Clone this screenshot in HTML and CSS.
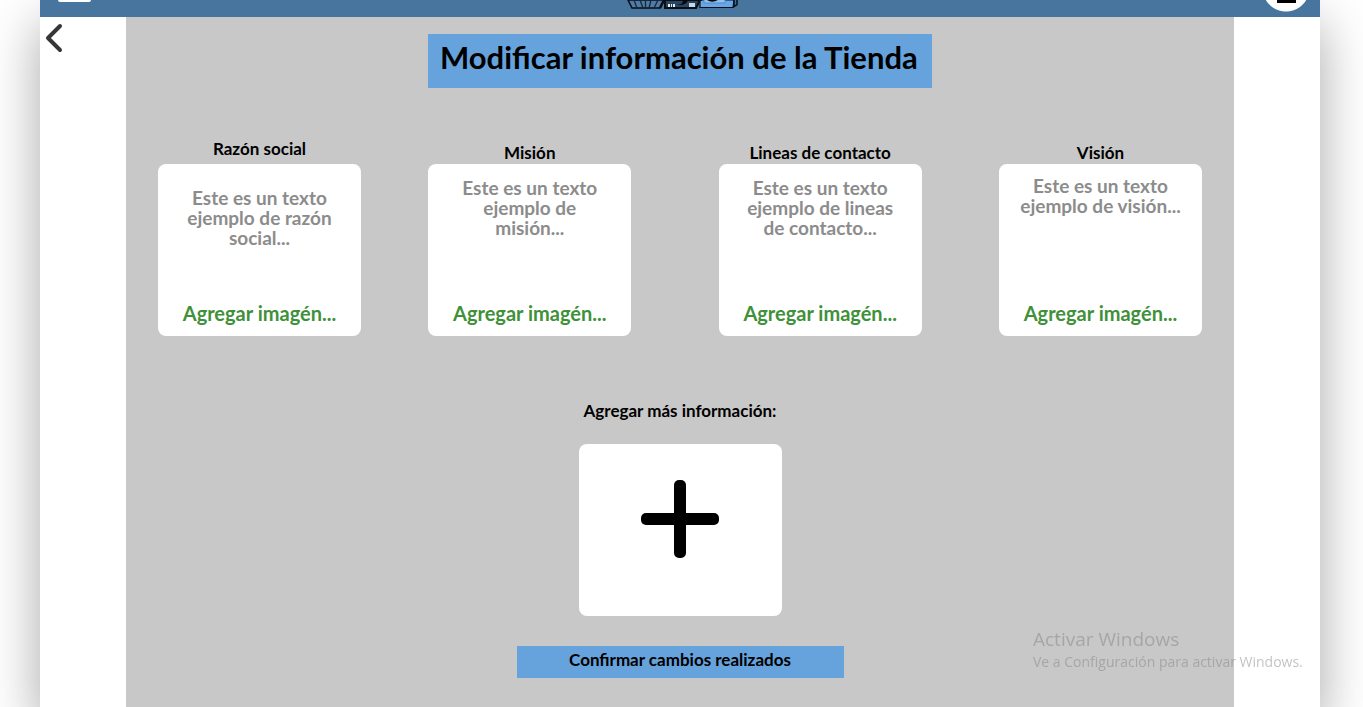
FILE: index.html
```html
<!DOCTYPE html>
<html lang="es">
<head>
<meta charset="utf-8">
<title>Modificar información de la Tienda</title>
<link rel="stylesheet" href="styles.css">
</head>
<body>
<div class="page">
  <header class="topbar">
    <button class="menu" type="button" aria-label="Menú"></button>
    <svg class="logo" viewBox="0 0 114 10" aria-hidden="true">
      <path d="M1 0 5 8H33L37 0Z" fill="#4f7ba6" stroke="#0a0f16" stroke-width="1.6"/>
      <path d="M7 0 10 8M13 0 16 8M18.500 0v8M24 0 22 8M31 0 27 8" stroke="#16283a" stroke-width="1.300" fill="none"/>
      <path d="M37 0 33 8" stroke="#0a0f16" stroke-width="2.500"/>
      <path d="M38 0V8H69L73 0Z" fill="#29445f" stroke="#0a0f16" stroke-width="2"/>
      <path d="M47 4q9 2 9-4h5q-1 5-9 5Z" fill="#05080c"/>
      <path d="M41 4h2v3h-2zM44 4h1v3h-1zM46 4h2v3h-2z" fill="#e3ebf2"/>
      <path d="M62 3h6v4h-6z" fill="#c9d8e6"/>
      <path d="M73 7.500V1L75 0H107L106 7.500Z" fill="#66a7ea" stroke="#0a0f16" stroke-width="1.200"/>
      <path d="M77 0v3h21V0" fill="#8fc0f1" stroke="#5389bd" stroke-width="1"/>
      <path d="M80 0q5 3.500 11 0Z" fill="#05080c"/>
      <path d="M107 0v6.500l3-2V0" fill="#3d6a97" stroke="#0a0f16" stroke-width="1.500"/>
    </svg>
    <a class="avatar" href="#perfil" aria-label="Perfil"><svg viewBox="0 0 48 12" aria-hidden="true"><path d="M15 0h19v3H15z"/></svg></a>
  </header>
  <div class="body">
    <div class="side"><a class="back" href="#volver" aria-label="Volver"><svg viewBox="0 0 18 30" aria-hidden="true"><path d="M15 3 3 15 15 27"/></svg></a></div>
    <main class="content">
      <h1 class="title">Modificar información de la Tienda</h1>
      <div class="cards">
        <section class="item first raised">
          <h2 class="label">Razón social</h2>
          <div class="card"><p class="sample low">Este es un texto ejemplo de razón social...</p><button class="add-image" type="button">Agregar imagén...</button></div>
        </section>
        <section class="item second">
          <h2 class="label">Misión</h2>
          <div class="card"><p class="sample">Este es un texto ejemplo de misión...</p><button class="add-image" type="button">Agregar imagén...</button></div>
        </section>
        <section class="item third">
          <h2 class="label">Lineas de contacto</h2>
          <div class="card"><p class="sample">Este es un texto ejemplo de lineas de contacto...</p><button class="add-image" type="button">Agregar imagén...</button></div>
        </section>
        <section class="item fourth">
          <h2 class="label">Visión</h2>
          <div class="card"><p class="sample wide">Este es un texto ejemplo de visión...</p><button class="add-image" type="button">Agregar imagén...</button></div>
        </section>
      </div>
      <h2 class="label more">Agregar más información:</h2>
      <button class="card plus" type="button" aria-label="Agregar más información"><svg viewBox="0 0 78 78" aria-hidden="true"><rect x="33" width="12" height="78" rx="5"/><rect y="33" width="78" height="12" rx="5"/></svg></button>
      <button class="confirm" type="button">Confirmar cambios realizados</button>
    </main>
    <div class="side"></div>
  </div>
</div>
<aside class="watermark"><p class="wm-title">Activar Windows</p><p class="wm-text">Ve a Configuración para activar Windows.</p></aside>
</body>
</html>
```
FILE: styles.css
```css
* { box-sizing: border-box; }
body { margin: 0; background: #fff; font-family: Lato, "Liberation Sans", sans-serif; font-weight: 700; color: #000; overflow: hidden; }
h1, h2, p { margin: 0; }
button { font: inherit; border: 0; padding: 0; cursor: pointer; }
svg { display: block; }
.page { margin: 0 43px 0 40px; min-height: 100vh; display: flex; flex-direction: column; background: #fff; box-shadow: 0 24px 50px rgba(0, 0, 0, .35); }
.topbar { height: 17px; padding: 0 10px 0 18px; background: #48759e; display: grid; grid-template-columns: 1fr auto 1fr; align-items: start; }
.menu { width: 33px; height: 2px; background: #fff; border-radius: 0 0 4px 4px; }
.logo { width: 114px; height: 10px; }
.avatar { justify-self: end; width: 48px; height: 12px; overflow: hidden; background: radial-gradient(circle at 24px -12px, #fff 23px, transparent 24px); }
.avatar svg { width: 48px; height: 12px; }
.body { flex: 1; display: grid; grid-template-columns: 86px 1fr 86px; }
.back { display: block; width: 18px; margin: 6px 0 0 5px; }
.back path { fill: none; stroke: #363636; stroke-width: 4; stroke-linecap: round; stroke-linejoin: round; }
.content { background: #c8c8c8; padding: 17px 32px 29px; display: flex; flex-direction: column; align-items: center; }
.title { background: #66a3dc; font-size: 31px; line-height: 46px; padding: 0 16px 8px 12px; width: 504px; text-align: center; white-space: nowrap; }
.cards { align-self: stretch; display: grid; grid-template-columns: 203px 67fr 203px 87fr 203px 77fr 203px; margin-top: 54px; }
.second { grid-column: 3; }
.third { grid-column: 5; }
.fourth { grid-column: 7; }
.label { font-size: 17px; line-height: 22px; text-align: center; white-space: nowrap; }
.cards .label { height: 22px; }
.raised .label { line-height: 14px; }
.card { width: 203px; height: 172px; background: #fff; border-radius: 8px; padding: 12px 16px; display: flex; flex-direction: column; justify-content: space-between; align-items: center; text-align: center; }
.sample { width: 158px; padding-top: 2px; font-size: 19px; line-height: 20px; color: #8c8c8c; }
.low { padding-top: 12px; }
.wide { width: 171px; padding-top: 0; }
.add-image { background: none; color: #3f9139; font-size: 20px; line-height: 22px; white-space: nowrap; }
.more { margin-top: 64px; }
.plus { margin-top: 22px; padding-top: 36px; justify-content: flex-start; }
.plus svg { width: 78px; height: 78px; }
.confirm { margin-top: 30px; width: 327px; background: #66a3dc; font-size: 17px; line-height: 28px; padding-bottom: 4px; }
.watermark { position: fixed; right: 55px; bottom: 35px; width: 275px; pointer-events: none; font-family: "Open Sans", sans-serif; font-weight: 400; color: rgba(130, 130, 130, .48); white-space: nowrap; }
.wm-title { font-size: 19px; line-height: 26px; }
.wm-text { font-size: 14px; line-height: 20px; }
```
